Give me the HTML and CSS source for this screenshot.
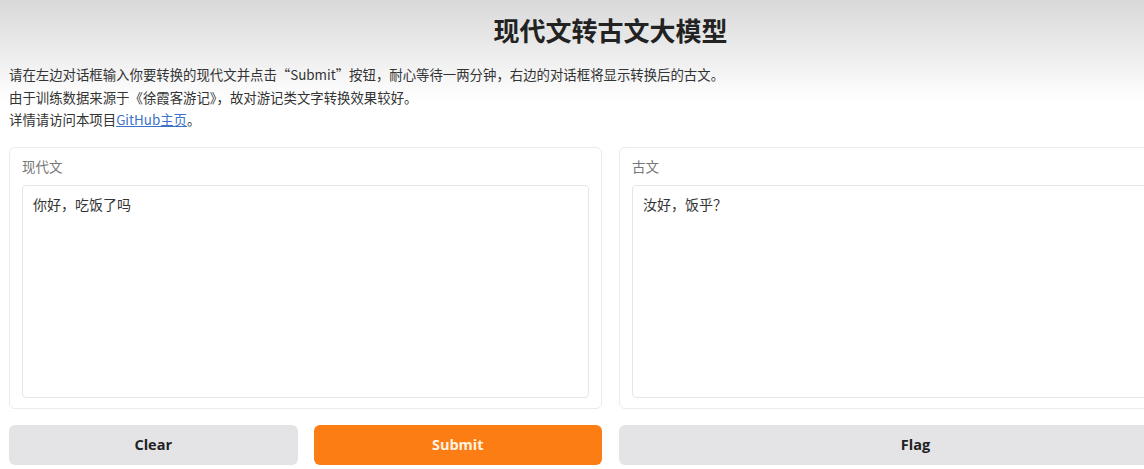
FILE: index.html
```html
<!DOCTYPE html>
<html lang="zh">
<head>
<meta charset="utf-8">
<title>现代文转古文大模型</title>
<link rel="stylesheet" href="styles.css">
</head>
<body>
<div class="app">
  <h1 class="title">现代文转古文大模型</h1>
  <div class="desc">
    <p>请在左边对话框输入你要转换的现代文并点击“Submit”按钮，耐心等待一两分钟，右边的对话框将显示转换后的古文。</p>
    <p>由于训练数据来源于《徐霞客游记》，故对游记类文字转换效果较好。</p>
    <p>详情请访问本项目<a href="#" class="link">GitHub主页</a>。</p>
  </div>
  <div class="row panels">
    <div class="panel">
      <div class="label">现代文</div>
      <div class="box">你好，吃饭了吗</div>
    </div>
    <div class="panel">
      <div class="label">古文</div>
      <div class="box">汝好，饭乎？</div>
    </div>
  </div>
  <div class="row actions">
    <div class="pair">
      <button class="btn">Clear</button>
      <button class="btn primary">Submit</button>
    </div>
    <button class="btn">Flag</button>
  </div>
</div>
</body>
</html>
```
FILE: styles.css
```css
html, body {
  margin: 0;
  padding: 0;
}
body {
  overflow: hidden;
  background: #fff linear-gradient(to bottom, #d9d9d9 0px, #e6e6e6 35px, #f3f3f3 70px, #fdfdfd 95px, #ffffff 105px) no-repeat;
  background-size: 100% 110px;
  font-family: "Noto Sans", "Noto Sans CJK SC", sans-serif;
  color: #222;
}
.app {
  width: 1203px;
  margin-left: 9px;
}
.title {
  margin: 0;
  padding-top: 12px;
  height: 36px;
  line-height: 36px;
  text-align: center;
  font-size: 26px;
  font-weight: 700;
  color: #222;
  font-family: "Noto Sans CJK SC", sans-serif;
}
.desc {
  margin-top: 15px;
  font-size: 13.4px;
  line-height: 22.5px;
  color: #333;
  font-family: "Noto Sans CJK SC", sans-serif;
}
.desc p {
  margin: 0;
}
.link {
  color: #3d72c8;
  text-decoration: underline;
}
.row {
  display: grid;
  grid-template-columns: 1fr 1fr;
  column-gap: 17px;
}
.panels {
  margin-top: 16px;
}
.panel {
  height: 262px;
  box-sizing: border-box;
  border: 1px solid #ebebeb;
  border-radius: 6px;
  padding: 9px 12px 10px 12px;
  display: flex;
  flex-direction: column;
  background: #fff;
}
.label {
  font-size: 13.5px;
  line-height: 18px;
  color: #777;
  margin-bottom: 10px;
  font-family: "Noto Sans CJK SC", sans-serif;
}
.box {
  flex: 1;
  border: 1px solid #e6e6e6;
  border-radius: 4px;
  padding: 8px 10px;
  font-size: 14px;
  line-height: 20px;
  color: #333;
  font-family: "Noto Sans CJK SC", sans-serif;
}
.actions {
  margin-top: 16px;
}
.pair {
  display: grid;
  grid-template-columns: 1fr 1fr;
  column-gap: 16px;
}
.btn {
  height: 40px;
  border: none;
  border-radius: 6px;
  background: #e4e4e7;
  color: #222;
  font-family: "Open Sans", "Noto Sans", sans-serif;
  font-size: 14.5px;
  font-weight: 700;
  cursor: pointer;
}
.btn.primary {
  background: #fb7d14;
  color: #fff3e0;
}
```
